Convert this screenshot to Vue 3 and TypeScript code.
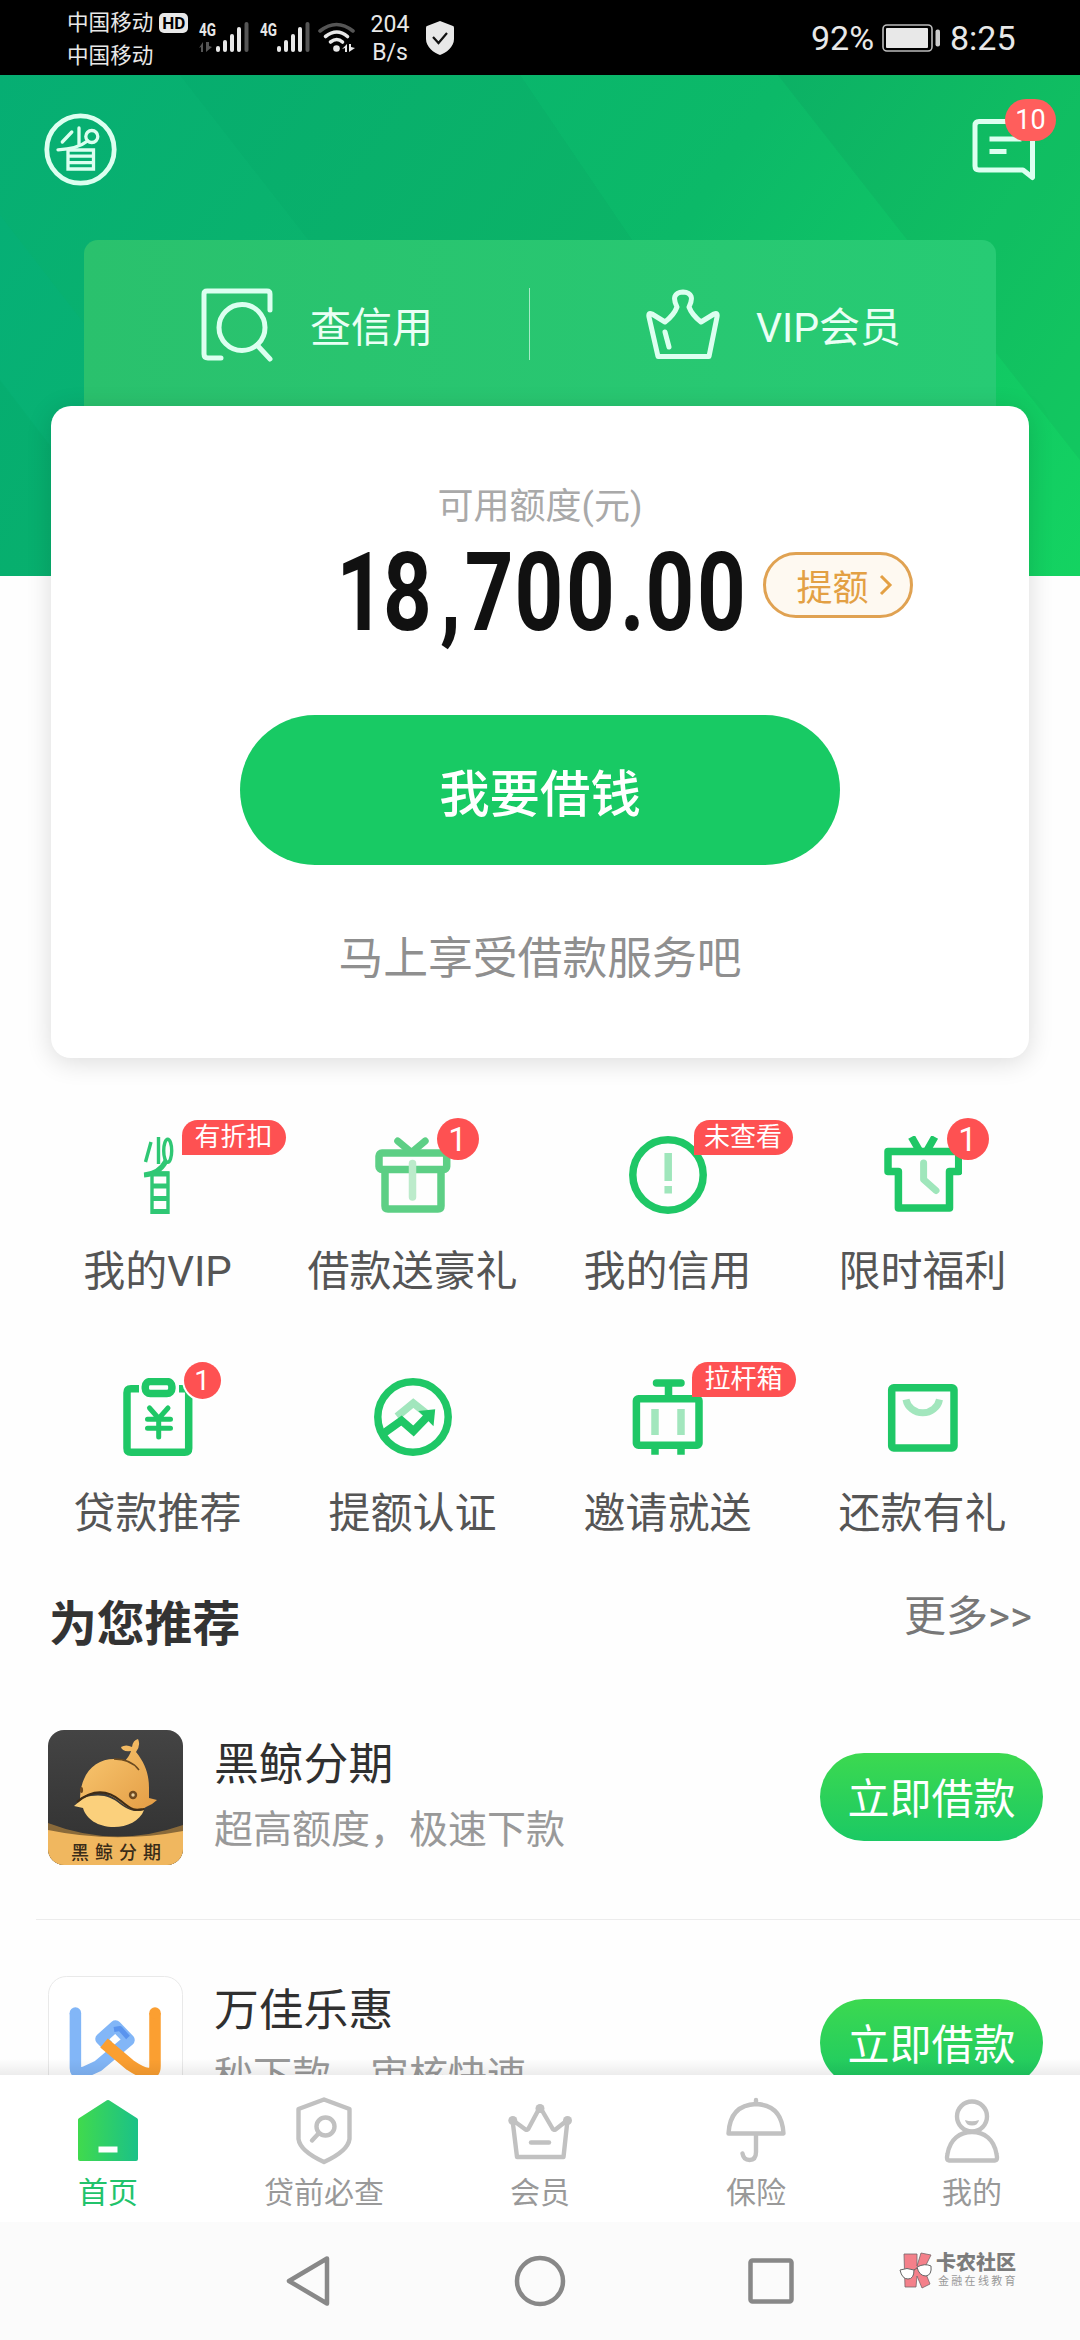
<script setup lang="ts">
interface Shortcut {
  id: string
  label: string
  tag?: string
  count?: number
  small?: boolean
}

interface Product {
  id: string
  name: string
  slogan: string
}

interface Tab {
  id: string
  label: string
}

const shortcuts: Shortcut[] = [
  { id: 'vip', label: '我的VIP', tag: '有折扣' },
  { id: 'gift', label: '借款送豪礼', count: 1 },
  { id: 'credit', label: '我的信用', tag: '未查看' },
  { id: 'limited', label: '限时福利', count: 1 },
  { id: 'loan', label: '贷款推荐', count: 1, small: true },
  { id: 'raise', label: '提额认证' },
  { id: 'invite', label: '邀请就送', tag: '拉杆箱' },
  { id: 'repay', label: '还款有礼' },
]

const products: Product[] = [
  { id: 'whale', name: '黑鲸分期', slogan: '超高额度，极速下款' },
  { id: 'wanjia', name: '万佳乐惠', slogan: '秒下款，审核快速' },
]

const tabs: Tab[] = [
  { id: 'home', label: '首页' },
  { id: 'check', label: '贷前必查' },
  { id: 'member', label: '会员' },
  { id: 'insure', label: '保险' },
  { id: 'mine', label: '我的' },
]
</script>

<template>
  <div class="screen">
    <div class="status">
      <div class="carriers">
        <div class="carrier">中国移动<span class="hd">HD</span></div>
        <div class="carrier">中国移动</div>
      </div>
      <svg class="signals" width="160" height="40" viewBox="196 18 160 40">
        <text x="199" y="36" class="net" textLength="17" lengthAdjust="spacingAndGlyphs">4G</text>
        <text x="260" y="36" class="net" textLength="17" lengthAdjust="spacingAndGlyphs">4G</text>
        <g fill="#555">
          <path d="M199 48l4-6v10h-2v-5zM206 42v10l6-5-3-1v-4z" />
          <rect x="244.500" y="22" width="4" height="30" rx="2" />
          <rect x="305.500" y="22" width="4" height="30" rx="2" />
        </g>
        <g v-for="dx in [0, 61]" :key="dx" fill="#e8e8e8" :transform="`translate(${dx} 0)`">
          <rect x="216" y="46" width="4" height="6" rx="2" />
          <rect x="223" y="40" width="4" height="12" rx="2" />
          <rect x="230" y="34" width="4" height="18" rx="2" />
          <rect x="237" y="27" width="4" height="25" rx="2" />
        </g>
        <g fill="none" stroke-width="3.600" stroke-linecap="round">
          <path d="M320 31q16.500-13 33 0" stroke="#555" />
          <path d="M325.500 36.500q11.500-9 22 0" stroke="#e8e8e8" />
          <path d="M330.500 42q6.500-5 12 0" stroke="#e8e8e8" />
        </g>
        <circle cx="336.500" cy="48.500" r="3.300" fill="#e8e8e8" />
        <path d="M342 49l5-5v8h-2v-4zM349 44v8l6-4-4-1v-3z" fill="#e8e8e8" />
      </svg>
      <div class="speed"><span>204</span><span>B/s</span></div>
      <svg class="guard" width="30" height="36" viewBox="0 0 30 36">
        <path d="M15 1l13 5q1 0 1 2v11c0 8-8 14-14 16C9 33 1 27 1 19V8q0-2 1-2z" fill="#e8e8e8" />
        <path d="M8 17l5.500 6L22 13" fill="none" stroke="#111" stroke-width="2.200" />
      </svg>
      <span class="clock battery-text">92%</span>
      <svg class="battery" width="59" height="28" viewBox="0 0 59 28">
        <rect x="1" y="1" width="49" height="26" rx="4" fill="none" stroke="#bbb" stroke-width="1.600" />
        <rect x="4" y="4" width="42" height="20" rx="1" fill="#e8e8e8" />
        <rect x="53.500" y="5.500" width="4.500" height="17" rx="2" fill="#ccc" />
      </svg>
      <span class="clock">8:25</span>
    </div>

    <main class="content">
      <header class="hero">
        <svg class="facets" width="1080" height="501" viewBox="0 75 1080 501" preserveAspectRatio="none">
          <path d="M520 75H778L1080 460V576H860z" fill="#0f7" opacity=".03" />
          <path d="M778 75H1080V460z" fill="#054" opacity=".05" />
          <path d="M0 215L280 576H0z" fill="#0be" opacity=".035" />
          <path d="M0 380L150 576H0z" fill="#084" opacity=".07" />
          <path d="M180 75H520L860 576H570z" fill="#064" opacity=".03" />
        </svg>
        <div class="hero-top">
          <svg width="73" height="73" viewBox="44.500 113.500 73 73" fill="none" stroke="#dcfff0">
            <circle cx="81" cy="150" r="33.700" stroke-width="4.800" />
            <g stroke-width="3.300" stroke-linecap="round">
              <path d="M72.300 132.500l-9.500 10M79.500 128.500v16" />
              <circle cx="92.300" cy="137" r="6" />
              <path d="M88 141.500q-10 8-29.500 8.800" />
              <path d="M68.500 150.500h25.500v19h-25.500zM69 156.700h25M69 163.200h25" stroke-linecap="butt" />
            </g>
          </svg>
          <div class="message">
            <svg width="64" height="64" viewBox="0 0 64 64" fill="none" stroke="#dcfff0" stroke-width="5">
              <path d="M60.500 3.500H7q-4 0-4 4V48q0 4 4 4H51l9.500 7.500z" stroke-linejoin="round" />
              <path d="M17.500 21h32M17.500 33.500h17" />
            </svg>
            <span class="message-count">10</span>
          </div>
        </div>
        <div class="quick">
          <div class="quick-item">
            <svg width="73" height="74" viewBox="0 0 73 74" fill="none" stroke="#dcfff0" stroke-width="5" stroke-linecap="round">
              <path d="M69 22V6q0-3-3-3H6Q3 3 3 6V66q0 4 4 4H20" />
              <circle cx="41" cy="39.500" r="23" />
              <path d="M56 57l13 14" />
            </svg>
            <span>查信用</span>
          </div>
          <i class="quick-line"></i>
          <div class="quick-item second">
            <svg width="74" height="72" viewBox="0 0 74 72" fill="none" stroke="#dcfff0" stroke-width="5" stroke-linejoin="round" stroke-linecap="round">
              <path d="M12 67.500L3 28Q2 23 6 25L19 33Q28 26 31 18Q24 4 37 3Q50 4 43 18Q46 26 55 33L68 25Q72 23 71 28L63 67.500z" />
              <path d="M19 43l4 15" />
            </svg>
            <span>VIP会员</span>
          </div>
        </div>
      </header>

      <section class="limit">
        <div class="limit-title">可用额度(元)</div>
        <div class="limit-row">
          <svg class="amount" width="408" height="100" viewBox="340 545 408 100">
            <g transform="scale(.78 1)">
              <text x="431 491 564 596 659.500 725.500 795 827.500 893.500" y="630">18,700.00</text>
            </g>
          </svg>
          <button class="raise">
            提额
            <svg width="14" height="22" viewBox="0 0 14 22"><path d="M2 2l9 9-9 9" fill="none" stroke="#e3a044" stroke-width="3" /></svg>
          </button>
        </div>
        <button class="borrow">我要借钱</button>
        <p class="limit-note">马上享受借款服务吧</p>
      </section>

      <section class="shortcuts">
        <div v-for="s in shortcuts" :key="s.id" class="shortcut">
          <div class="shortcut-icon">
            <svg width="78" height="78" viewBox="0 0 78 78" fill="none" stroke="#1fc766" stroke-width="7.500">
              <g v-if="s.id === 'vip'" stroke="#2fc774" stroke-width="3.400">
                <path d="M32 6l-5.500 20M39.500 1v27" />
                <ellipse cx="48.700" cy="14.700" rx="4" ry="11.500" />
                <path d="M47 25Q40 38 25 39" stroke-width="5" />
                <path d="M33 37h16v39.500H33z" />
                <path d="M32 38h18M32 50h18M32 62.500h18M32 75.500h18" stroke-width="5" />
              </g>
              <g v-else-if="s.id === 'gift'" stroke="#5dcf85" stroke-linecap="round" stroke-linejoin="round">
                <path d="M23.700 5l13.800 11.500L51.200 5" stroke-width="7" />
                <rect x="5" y="17" width="67.700" height="16.500" rx="3" />
                <path d="M11 34v36q0 3 3 3h50q3 0 3-3V34" />
                <path d="M38.500 27.500V61" stroke="#bcebcb" />
              </g>
              <g v-else-if="s.id === 'credit'">
                <circle cx="39" cy="39" r="35.200" />
                <path d="M39.200 17v28M39.200 50v7.500" stroke="#9fe6bb" />
              </g>
              <g v-else-if="s.id === 'limited'" stroke-linejoin="round">
                <path d="M27.500 1l7.500 13M50.800 1l-7.500 13" />
                <path d="M4 15.500h70.700V35.500H65.500V72H14.400V35.500H4z" />
                <path d="M39.600 27v16.500L52 54.500" stroke="#9fe6bb" stroke-width="7" stroke-linecap="round" />
              </g>
              <g v-else-if="s.id === 'loan'">
                <path d="M20 10.800H12q-4 0-4 4V70.200q0 4 4 4H65.700q4 0 4-4V14.800q0-4-4-4H60" />
                <rect x="26.300" y="3.500" width="26.600" height="12" rx="5" />
                <path d="M30.500 30l9.200 10.500L49 30M28.500 41.300h23M28.500 50.300h23M39.700 41v18" stroke-width="5" stroke-linecap="round" />
              </g>
              <g v-else-if="s.id === 'raise'">
                <path d="M23 38.500L39.300 25 53 36" stroke="#a2e6bd" />
                <circle cx="39" cy="39" r="35.200" />
                <path d="M8 56.500l19.500-14L39.500 53 54 38" stroke-width="8" />
                <path d="M44.400 33l16.800-1.700-1.700 17z" fill="#1fc766" stroke="none" />
              </g>
              <g v-else-if="s.id === 'invite'">
                <path d="M27.500 5h24.500" stroke-linecap="round" />
                <path d="M39.500 5v13M26 70v6.700M52 70v6.700" />
                <rect x="7.400" y="20.700" width="62.600" height="46.600" rx="2" />
                <path d="M26 31v26M52 31v26" stroke="#a2e6bd" />
              </g>
              <g v-else>
                <rect x="7.700" y="9.700" width="62.300" height="60.300" rx="2" />
                <path d="M22 21.500a17 16 0 0 0 33.500 0" stroke="#a2e6bd" stroke-width="7" />
              </g>
            </svg>
            <span v-if="s.tag" class="tag" :class="s.id">{{ s.tag }}</span>
            <span v-if="s.count" class="dot" :class="[s.id, { small: s.small }]">{{ s.count }}</span>
          </div>
          <span class="shortcut-label">{{ s.label }}</span>
        </div>
      </section>

      <section class="recommend">
        <div class="recommend-head">
          <h2>为您推荐</h2>
          <span class="more">更多&gt;&gt;</span>
        </div>
        <div v-for="p in products" :key="p.id" class="product">
          <svg v-if="p.id === 'whale'" class="product-icon" width="135" height="135" viewBox="0 0 135 135">
            <defs>
              <linearGradient id="gold" x1="0" y1="0" x2="1" y2="1">
                <stop offset="0" stop-color="#fbcb74" />
                <stop offset="1" stop-color="#e39c44" />
              </linearGradient>
              <linearGradient id="dark" x1="0" y1="0" x2="0" y2="1">
                <stop offset="0" stop-color="#444" />
                <stop offset="1" stop-color="#303030" />
              </linearGradient>
              <clipPath id="tile"><rect width="135" height="135" rx="16" /></clipPath>
            </defs>
            <g clip-path="url(#tile)">
              <rect width="135" height="135" fill="url(#dark)" />
              <path d="M0 93Q67 119 135 95V135H0z" fill="#8a6a3a" />
              <path d="M0 100Q67 114 135 101V135H0z" fill="#f0b75f" />
              <path d="M35 68C52 63 62 66 72 74S90 82 96 80C92 91 79 97 66 97C50 97 38 89 35 78L26 76Q31 72 35 68z" fill="#fbd07c" />
              <path d="M32 68C33 42 48 29 66 29Q73 29 77 31Q82 25 83 21Q74 22 73 17Q78 14 84 17Q85 10 90 9Q93 15 88 22C97 33 101 44 101 58V68L109 70Q104 75 98 77Q91 83 81 78C67 70 57 54 32 68z" fill="url(#gold)" />
              <path d="M29 72C46 58 60 60 73 71S88 80 96 79" fill="none" stroke="#3f2c16" stroke-width="2.200" />
              <path d="M66 29Q83 29 91 40" fill="none" stroke="#6b4a20" stroke-width="1.500" />
              <circle cx="85" cy="65" r="4.200" fill="#6f4a20" />
              <circle cx="85" cy="65" r="1.700" fill="#e8d0a0" />
              <ellipse cx="33.500" cy="60" rx="1.600" ry="3" fill="#6f4a20" />
              <text x="23" y="129" class="tile-text">黑鲸分期</text>
            </g>
          </svg>
          <svg v-else class="product-icon" width="135" height="135" viewBox="0 0 135 135">
            <rect x=".500" y=".500" width="134" height="134" rx="18" fill="#fff" stroke="#e9e9e9" />
            <g fill="none" stroke-width="11.500" stroke-linejoin="round">
              <path d="M27.400 37V92Q27.400 99 37 96L50 90L81 64L67.500 50L53 63L60 70" stroke="#82b6f7" />
              <path d="M66 53.500l6-1 8 9" stroke="#5a94ee" stroke-width="5" />
              <path d="M56 67L82 89Q97 99 103 97Q107 96 107 90V37" stroke="#fb9f31" />
            </g>
            <circle cx="27.400" cy="37" r="5.750" fill="#82b6f7" />
            <circle cx="107" cy="37" r="5.750" fill="#fb9f31" />
          </svg>
          <div class="product-info">
            <div class="product-name">{{ p.name }}</div>
            <div class="product-slogan">{{ p.slogan }}</div>
          </div>
          <button class="apply">立即借款</button>
        </div>
      </section>
      <div class="fade"></div>
    </main>

    <nav class="tabs">
      <div v-for="t in tabs" :key="t.id" class="tab" :class="{ active: t.id === 'home' }">
        <svg width="68" height="70" viewBox="0 0 68 70" fill="none" stroke="#c1c1c1" stroke-width="4.400" stroke-linejoin="round" stroke-linecap="round">
          <template v-if="t.id === 'home'">
            <defs>
              <linearGradient id="house"><stop offset="0" stop-color="#3fd94f" /><stop offset="1" stop-color="#1cc286" /></linearGradient>
            </defs>
            <path d="M6 25L34 7l28 18V64H6z" fill="url(#house)" stroke="url(#house)" stroke-width="4" />
            <path d="M24.500 54.500h19" stroke="#fff" stroke-width="6" stroke-linecap="butt" />
          </template>
          <template v-else-if="t.id === 'check'">
            <path d="M34 4.500L8.500 14V44Q10 56 34 67Q58 56 59.500 44V14z" />
            <circle cx="35.500" cy="31.500" r="9" />
            <path d="M28.500 38.500L22 45.500" />
          </template>
          <template v-else-if="t.id === 'member'">
            <path d="M6.500 25l4.500 37h46.500L61.500 25 49.500 34.500q-2 1-3-1L34 12 22.500 33.500q-1 2-3 1z" />
            <path d="M25 47.500h18" />
            <g fill="#c1c1c1" stroke="none"><circle cx="6.800" cy="25.500" r="4.500" /><circle cx="34" cy="13.500" r="4.500" /><circle cx="61.500" cy="25.500" r="4.500" /></g>
          </template>
          <template v-else-if="t.id === 'insure'">
            <path d="M34 7V5M6.500 38.500Q8 10 34 9Q60 10 61.500 38.500zM34 39V57q0 8-6.500 8-6 0-7-6.500" />
          </template>
          <template v-else>
            <circle cx="34" cy="21.500" r="15" />
            <path d="M27 25q7 2.500 14 0-1 5.500-7 5.500T27 25z" fill="#c1c1c1" stroke="none" />
            <path d="M11 65.500Q8 65.500 9.500 59C12 44 22 37 34 37S56 44 58.500 59Q60 65.500 57 65.500z" />
          </template>
        </svg>
        <span>{{ t.label }}</span>
      </div>
    </nav>

    <footer class="sysnav">
      <div class="keys">
        <svg width="54" height="54" viewBox="0 0 54 54"><path d="M45 4.500L7 27 45 49.500z" /></svg>
        <svg width="54" height="54" viewBox="0 0 54 54"><circle cx="27" cy="27" r="23" /></svg>
        <svg width="54" height="54" viewBox="0 0 54 54"><rect x="6.500" y="6.500" width="41" height="41" rx="2" /></svg>
      </div>
      <div class="mark">
        <svg width="34" height="37" viewBox="0 0 34 37">
          <g fill="#f4808a" stroke="#75666a" stroke-width=".8">
            <path d="M5 2h13v12L22 1l10 2-7 14 6 15-8 4-5-12-1 11H6z" />
          </g>
          <path d="M1 18q7-3 14 0 0 9-6 9t-8-9zM18 15q8-4 14-1 1 9-5 10-7 0-9-9zM15 18l3-2" fill="#fff" stroke="#666" stroke-width="1" />
        </svg>
        <div class="mark-text"><b>卡农社区</b><small>金融在线教育</small></div>
      </div>
    </footer>
  </div>
</template>

<style>
body {
  margin: 0;
  background: #fff;
}
</style>

<style scoped>
.screen {
  width: 1080px;
  height: 2340px;
  overflow: hidden;
  display: flex;
  flex-direction: column;
  background: #fefefe;
  font-family: Roboto, "Noto Sans CJK SC", sans-serif;
  color: #333;
}

button {
  border: 0;
  padding: 0;
  font-family: inherit;
  color: #fff;
}

svg {
  display: block;
  flex: none;
}

/* status bar */
.status {
  flex: none;
  height: 75px;
  box-sizing: border-box;
  background: #000;
  color: #e8e8e8;
  display: flex;
  padding: 0 0 0 67px;
}

.carriers {
  width: 129px;
  padding-top: 6px;
}

.carrier {
  display: flex;
  align-items: center;
  height: 33px;
  font-size: 21.6px;
  line-height: 33px;
  white-space: nowrap;
}

.hd {
  margin-left: 6px;
  width: 29px;
  height: 20px;
  border-radius: 5px;
  background: #e8e8e8;
  color: #000;
  font-size: 17px;
  font-weight: 700;
  line-height: 20px;
  text-align: center;
}

.signals {
  margin-top: 18px;
}

.net {
  font-size: 18px;
  font-weight: 700;
  fill: #e8e8e8;
}

.speed {
  width: 48px;
  margin-left: 10px;
  padding-top: 11px;
  display: flex;
  flex-direction: column;
  align-items: center;
  font-size: 23px;
  line-height: 28px;
}

.guard {
  margin: 20px 0 0 11px;
}

.clock {
  font-size: 34px;
  line-height: 76px;
  width: 66px;
}

.battery-text {
  margin-left: 356px;
  width: 71px;
}

.battery {
  margin: 24px 9px 0 0;
}

/* page body */
.content {
  flex: 1;
  min-height: 0;
  overflow: hidden;
  position: relative;
}

.hero {
  position: relative;
  height: 501px;
  background: linear-gradient(125deg, #06ae73 0%, #0db768 55%, #15d261 100%);
}

.facets {
  position: absolute;
  left: 0;
  top: 0;
}

.hero-top {
  position: relative;
  display: flex;
  justify-content: space-between;
  align-items: flex-start;
  padding: 38px 44px 0;
  height: 127px;
}

.message {
  position: relative;
  margin-top: 5px;
}

.message-count {
  position: absolute;
  left: 33px;
  top: -19px;
  width: 51px;
  height: 42px;
  border-radius: 21px;
  background: #ff5e5c;
  color: #fff;
  font-size: 27px;
  line-height: 42px;
  text-align: center;
}

.quick {
  position: relative;
  margin: 0 84px;
  height: 200px;
  box-sizing: border-box;
  border-radius: 14px 14px 0 0;
  background: linear-gradient(90deg, #2ac16d, #27cb74);
  display: flex;
  align-items: flex-start;
  padding: 48px 0 0 117px;
}

.quick-item {
  width: 328px;
  display: flex;
  align-items: center;
  gap: 36px;
  height: 74px;
  font-size: 41px;
  color: #eafff5;
}

.quick-item span {
  padding-bottom: 3px;
}

.quick-line {
  width: 1px;
  height: 72px;
  background: #a6ebc6;
}

.quick-item.second {
  margin-left: 116px;
}

.limit {
  position: relative;
  box-sizing: border-box;
  width: 978px;
  height: 652px;
  margin: -170px auto 0;
  padding-top: 75px;
  border-radius: 20px;
  background: #fff;
  box-shadow: 0 4px 26px rgba(0, 0, 0, 0.14);
  display: flex;
  flex-direction: column;
  align-items: center;
}

.limit-title {
  height: 53px;
  font-size: 36px;
  line-height: 53px;
  color: #a9a9a9;
}

.limit-row {
  align-self: flex-start;
  margin: 11px 0 0 289px;
  display: flex;
  align-items: flex-start;
}

.amount {
  overflow: visible;
}

.amount text {
  font-family: Roboto, sans-serif;
  font-size: 109px;
  font-weight: 700;
  fill: #111;
}

.raise {
  margin: 7px 0 0 15px;
  box-sizing: border-box;
  width: 150px;
  height: 66px;
  padding-left: 13px;
  border: 3px solid #e0a252;
  border-radius: 33px;
  background: #fef9f1;
  color: #e3a044;
  font-size: 36px;
  display: flex;
  align-items: center;
  justify-content: center;
  gap: 10px;
}

.borrow {
  margin-top: 70px;
  width: 600px;
  height: 150px;
  flex: none;
  border-radius: 75px;
  background: #18ca64;
  font-size: 50.400px;
  font-weight: 500;
}

.limit-note {
  margin: 61px 0 0;
  font-size: 44.800px;
  line-height: 66px;
  color: #8f8f8f;
}

/* shortcut grid */
.shortcuts {
  display: grid;
  grid-template-columns: repeat(4, 255px);
  grid-auto-rows: 242px;
  margin: 78px 0 0 30px;
}

.shortcut {
  display: flex;
  flex-direction: column;
  align-items: center;
}

.shortcut-icon {
  position: relative;
  width: 78px;
  height: 78px;
}

.shortcut-label {
  margin-top: 27px;
  font-size: 42px;
  line-height: 62px;
  white-space: nowrap;
  color: #555;
}

.tag {
  position: absolute;
  left: 63px;
  top: -16px;
  width: 104px;
  height: 35px;
  border-radius: 16px 18px 18px 0;
  background: #fe5152;
  color: #fff;
  font-size: 26px;
  line-height: 35px;
  text-align: center;
  white-space: nowrap;
}

.tag.credit {
  left: 65px;
  width: 99px;
}

.dot {
  position: absolute;
  left: 63px;
  top: -18px;
  width: 42px;
  height: 42px;
  border-radius: 50%;
  background: #fe5152;
  color: #fff;
  font-size: 33px;
  line-height: 43px;
  text-align: center;
}

.dot.small {
  left: 65px;
  top: -16px;
  width: 37px;
  height: 37px;
  font-size: 28px;
  line-height: 38px;
  box-shadow: 0 0 0 2px #fff;
}

/* recommendations */
.recommend-head {
  display: flex;
  justify-content: space-between;
  height: 54px;
  padding: 0 48px 0 49px;
}

.recommend-head h2 {
  margin: -30px 0 0;
  font-size: 47.800px;
  line-height: 71px;
  font-weight: 700;
  color: #333;
}

.more {
  margin-top: -34px;
  font-size: 42px;
  line-height: 62px;
  color: #777;
}

.product {
  display: flex;
  align-items: flex-start;
  height: 246px;
  box-sizing: border-box;
  margin-left: 36px;
  padding: 56px 37px 0 12px;
  border-bottom: 1px solid #ececec;
}

.product-info {
  margin-left: 31px;
  flex: 1;
}

.product-name {
  margin-top: 2px;
  font-size: 44.800px;
  line-height: 66px;
  color: #303030;
}

.product-slogan {
  margin-top: 3px;
  font-size: 39px;
  line-height: 58px;
  color: #999;
}

.tile-text {
  font-size: 18px;
  font-weight: 500;
  letter-spacing: 6px;
  fill: #3a2c18;
}

.apply {
  margin-top: 23px;
  width: 223px;
  height: 88px;
  padding-bottom: 3px;
  border-radius: 44px;
  background: linear-gradient(180deg, #3cd950, #1bc964);
  font-size: 42px;
}

.fade {
  position: absolute;
  left: 0;
  right: 0;
  bottom: 0;
  height: 16px;
  background: linear-gradient(180deg, rgba(0, 0, 0, 0), rgba(0, 0, 0, 0.07));
}

/* bottom tabs */
.tabs {
  flex: none;
  height: 147px;
  display: flex;
  background: #fff;
}

.tab {
  flex: 1;
  padding-top: 20px;
  display: flex;
  flex-direction: column;
  align-items: center;
  font-size: 30px;
  line-height: 44px;
  color: #999;
}

.tab span {
  margin-top: 6px;
}

.tab.active {
  color: #21c36b;
}

/* system keys */
.sysnav {
  flex: none;
  height: 118px;
  box-sizing: border-box;
  display: flex;
  background: #fbfbfb;
  padding: 32px 0 0 282px;
}

.keys {
  display: flex;
  gap: 177px;
}

.keys svg {
  fill: none;
  stroke: #888;
  stroke-width: 4.5;
  stroke-linejoin: round;
}

.mark {
  display: flex;
  margin: -2px 0 0 101px;
}

.mark-text {
  margin: 1px 0 0 3px;
  display: flex;
  flex-direction: column;
}

.mark-text b {
  font-size: 20px;
  line-height: 20px;
  font-weight: 900;
  color: #7c7c7c;
}

.mark-text small {
  margin: 2px 0 0 2px;
  font-size: 11px;
  line-height: 13px;
  letter-spacing: 2.3px;
  color: #999;
}
</style>
